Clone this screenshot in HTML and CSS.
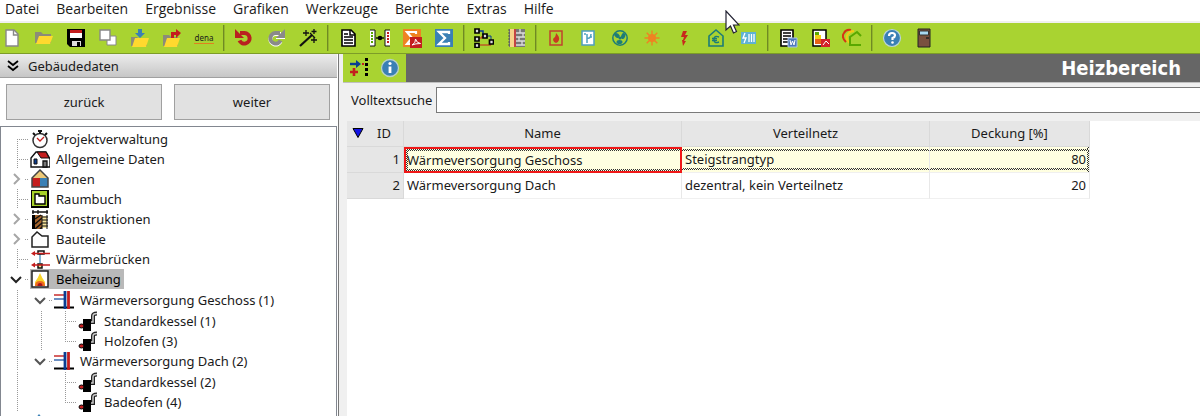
FILE: index.html
```html
<!DOCTYPE html>
<html lang="de">
<head>
  <meta charset="utf-8">
  <title>Heizbereich</title>
  <link rel="stylesheet" href="styles.css">
</head>
<body>
  <!-- icons used more than once -->
  <svg class="defs">
    <symbol id="pipes" viewBox="0 0 20 20">
      <path d="M0 5h11" stroke="#c41e1e" stroke-width="1.4"/>
      <path d="M0 9h11" stroke="#2c5fa8" stroke-width="1.4"/>
      <path d="M0 17.5h20" stroke="#000" stroke-width="2"/>
      <path d="M11 1v18" stroke="#0b3d91" stroke-width="2.8"/>
      <path d="M14.5 1v18" stroke="#c41e1e" stroke-width="2.8"/>
    </symbol>
    <symbol id="boiler" viewBox="0 0 20 20">
      <path d="M11 11h4V5q0-2.500 4-2.500" fill="none" stroke="#222" stroke-width="4"/>
      <path d="M11 11h4V5q0-2.500 4-2.500" fill="none" stroke="#ccc" stroke-width="1.500"/>
      <path d="M5 8h8v12H5z"/>
      <ellipse cx="3.500" cy="15" rx="2.500" ry="2" fill="#c41e1e" stroke="#000"/>
    </symbol>
    <symbol id="right" viewBox="0 0 12 12"><path d="M4 1l5 5-5 5" fill="none" stroke="#a6a6a6" stroke-width="2"/></symbol>
    <symbol id="down" viewBox="0 0 12 12"><path d="M1 4l5 5 5-5" fill="none" stroke="currentColor" stroke-width="2"/></symbol>
  </svg>

  <nav class="menu">
    <button>Datei</button>
    <button>Bearbeiten</button>
    <button>Ergebnisse</button>
    <button>Grafiken</button>
    <button>Werkzeuge</button>
    <button>Berichte</button>
    <button>Extras</button>
    <button>Hilfe</button>
  </nav>

  <div class="toolbar">
    <button aria-label="Neu"><svg viewBox="0 0 20 20"><path d="M4 2h8l4 4v12H4z" fill="#fff" stroke="#888" stroke-width="1.4"/><path d="M11.500 2v5H16" fill="none" stroke="#888" stroke-width="1.4"/></svg></button>
    <button aria-label="Öffnen"><svg viewBox="0 0 20 20"><path d="M1 4h6l2 2h8v9H1z" fill="#8c8c78"/><path d="M5 8h14l-3 8H2z" fill="#ffd92e"/></svg></button>
    <button aria-label="Speichern"><svg viewBox="0 0 20 20"><path d="M1 1h18v18H4l-3-3z"/><path d="M4 2h12v8H4z" fill="#fff"/><path d="M4 2h12v3H4z" fill="#c41e1e"/><path d="M6 13h9v5H6z" fill="#ddd"/><path d="M11 14h3v4h-3z"/></svg></button>
    <button aria-label="Kopieren"><svg viewBox="0 0 20 20"><path d="M9 8h9v9H9z" fill="#fff" stroke="#888"/><path d="M2 2h10v10H2z" fill="#fff" stroke="#888" stroke-width="1.400"/></svg></button>
    <button aria-label="Importieren"><svg viewBox="0 0 20 20"><path d="M1 9h6l2 2h8v7H1z" fill="#8c8c78"/><path d="M5 10h14l-3 9H2z" fill="#ffd92e"/><path d="M8 1h4v4h3l-5 5-5-5h3z" fill="#3a80b5"/></svg></button>
    <button aria-label="Exportieren"><svg viewBox="0 0 20 20"><path d="M1 7h6l2 2h7v9H1z" fill="#8c8c78"/><path d="M5 10h13l-3 9H2z" fill="#ffd92e"/><path d="M9 8V4h5V1l5 4-5 5V7h-2v3H9z" fill="#c41e1e"/></svg></button>
    <button class="dena">dena</button>
    <i></i>
    <button aria-label="Rückgängig"><svg viewBox="0 0 20 20"><path d="M6 5h4.500a5.300 5.300 0 1 1-5 7.500" fill="none" stroke="#b92020" stroke-width="4"/><path d="M1 1v9h9z" fill="#b92020"/></svg></button>
    <button aria-label="Wiederholen"><svg viewBox="0 0 20 20"><path d="M15 6H9.500a5.300 5.300 0 1 0 5 7.500" fill="none" stroke="#fff" stroke-width="4"/><path d="M14 5H9.500a5.300 5.300 0 1 0 5 7.500" fill="none" stroke="#8a8a8a" stroke-width="4"/><path d="M19 1v9h-9z" fill="#8a8a8a"/><path d="M10 10.500h9" stroke="#fff"/></svg></button>
    <button aria-label="Assistent"><svg viewBox="0 0 20 20"><path d="M2 18L14 7" stroke="#111" stroke-width="2.200"/><path d="M8 2v6M5 5h6M16 1v5M13.500 3.500h5M16 9v6M13 12h6M12 5l5 5" stroke="#111" stroke-width="1.300"/></svg></button>
    <i></i>
    <button aria-label="Bericht"><svg viewBox="0 0 20 20"><path d="M4 2h9l4 4v12H4z" fill="#fff" stroke="#000" stroke-width="1.600"/><path d="M12 2v5h5M6 6h4M6 9h9M6 12h9M6 15h9" fill="none" stroke="#000" stroke-width="1.500"/></svg></button>
    <button aria-label="Vergleich"><svg viewBox="0 0 20 20"><path d="M0 2h5v16H0zM15 2h5v16h-5z" fill="#fff"/><path d="M0 2h5v16H0M20 2h-5v16h5" fill="none" stroke="#111"/><path d="M2 4v12" stroke="#59a800" stroke-width="2" stroke-dasharray="2 1"/><path d="M18 4v12" stroke="#c41e1e" stroke-width="2" stroke-dasharray="2 1"/><path d="M6 10h8" stroke="#111" stroke-width="1.500"/><circle cx="10" cy="10" r="2.300"/></svg></button>
    <button aria-label="Summe als PDF"><svg viewBox="0 0 20 20"><path d="M1 1h18v18H1z" fill="#ee8322"/><path d="M14 6V4H5l5 6-5 6h7" fill="none" stroke="#fff" stroke-width="2.200"/><path d="M8 9h12v11H8z" fill="#c41e1e"/><path d="M10 17q4-2 3.500-6 1 4 5 4.500-5 0-8.500 1.500" fill="none" stroke="#fff"/></svg></button>
    <button aria-label="Summe"><svg viewBox="0 0 20 20"><path d="M1 1h18v18H1z" fill="#3a80b5"/><path d="M15 6V4H5l6 6-6 6h10v-2" fill="none" stroke="#fff" stroke-width="2.300"/></svg></button>
    <i></i>
    <button aria-label="Baumstruktur"><svg viewBox="0 0 20 20"><path d="M4 3h5v4" fill="none" stroke="#0b3d91" stroke-width="1.500"/><path d="M4 10h4V8M4 17h13v-3" fill="none" stroke="#c41e1e"/><path d="M11 8h6v4" fill="none" stroke="#0b3d91"/><g fill="#ddd" stroke="#000" stroke-width="1.700"><path d="M1 1h4v4H1zM1 9h4v4H1zM1 15.500h4v4H1zM9 6h4v4H9zM15.500 12h4v4h-4z"/></g></svg></button>
    <button aria-label="Wandaufbau"><svg viewBox="0 0 20 20"><path d="M3 1h16v18H3z" fill="#777"/><path d="M4 1h4v18H4z" fill="#f7d28b"/><path d="M3 1v18" stroke="#555" stroke-dasharray="2 1"/><path d="M9 1v18" stroke="#d33" stroke-width="1.500"/><path d="M10 5h9M10 9h9M10 13h9M10 17h9M14 1v4M17 5v4M13 9v4M16 13v4" stroke="#ddd" stroke-width="1.300"/></svg></button>
    <i></i>
    <button aria-label="Heizung"><svg viewBox="0 0 20 20"><path d="M4 3h12v14H4z" fill="none" stroke="#c0442c" stroke-width="1.500"/><path d="M10 5q4 4 3 7-1 3-3 3t-3-3q0-2 2-3 1-2 1-4" fill="#c83a20"/></svg></button>
    <button aria-label="Trinkwasser"><svg viewBox="0 0 20 20"><path d="M4 3h12v14H4z" fill="#fff" stroke="#4d9fc0" stroke-width="1.500"/><path d="M9 15V6M9 10q4 1 4-4M7 5v2M12 9h2" fill="none" stroke="#4d9fc0" stroke-width="1.500"/></svg></button>
    <button aria-label="Lüftung"><svg viewBox="0 0 20 20"><circle cx="10" cy="10" r="7.200" fill="none" stroke="#1c7c78" stroke-width="1.500"/><g fill="#1c7c78"><circle cx="10" cy="10" r="1.500"/><ellipse cx="7" cy="7.500" rx="3" ry="2" transform="rotate(35 7 7.500)"/><ellipse cx="13.200" cy="8" rx="2" ry="3" transform="rotate(20 13 8)"/><ellipse cx="9.500" cy="14" rx="3" ry="2"/></g></svg></button>
    <button aria-label="Solar"><svg viewBox="0 0 20 20"><circle cx="10" cy="10" r="4" fill="#ee8322"/><path d="M10 2.500v15M2.500 10h15M4.700 4.700l10.600 10.600M15.300 4.700L4.700 15.300" stroke="#ee8322" stroke-width="1.400"/></svg></button>
    <button aria-label="Strom"><svg viewBox="0 0 20 20"><path d="M9 3h4l-2 4h3l-4 6h2l-3 5-1-6h1l1-3H7z" fill="#c82a1c"/></svg></button>
    <button aria-label="Kosten"><svg viewBox="0 0 20 20"><path d="M3 18V8l7-6 7 6v10z" fill="none" stroke="#1c7c78" stroke-width="1.600"/><path d="M13 9q-5-2-5 2.500t5 2.500M6 10.500h5M6 12.500h5" fill="none" stroke="#1c7c78" stroke-width="1.400"/></svg></button>
    <button aria-label="Photovoltaik"><svg viewBox="0 0 20 20"><path d="M3 4h15v12H3z" fill="#5fb2d3"/><path d="M11 6v8M13.500 6v8M16 6v8M7 5l-2 5h3l-2 5" fill="none" stroke="#fff" stroke-width="1.300"/></svg></button>
    <i></i>
    <button aria-label="Word-Bericht"><svg viewBox="0 0 20 20"><path d="M3 2h12v16H3z" fill="#fff" stroke="#000" stroke-width="1.600"/><path d="M5 5h8M5 8h8M5 11h5M5 14h5" stroke="#000" stroke-width="1.600"/><path d="M10 10h9v9h-9z" fill="#4d78bc" stroke="#a9c3e8"/><path d="M12 12l1 5 1.500-4 1.500 4 1-5" fill="none" stroke="#fff"/></svg></button>
    <button aria-label="Energieausweis"><svg viewBox="0 0 20 20"><path d="M3 2h13v16H3z" fill="#fff" stroke="#000" stroke-width="1.500"/><path d="M5 4h4v3H5z" fill="#59a800"/><path d="M5 7h6v4H5z" fill="#f1cf16"/><path d="M5 11h7v5H5z" fill="#e66315"/><path d="M11 11h9v8h-9z" fill="#d3202a"/><path d="M13 17l3-4 3 3" fill="none" stroke="#fff"/></svg></button>
    <button aria-label="Sanierung"><svg viewBox="0 0 20 20"><path d="M4 14Q-1 9 2 5q2-4 7-3" fill="none" stroke="#d63315" stroke-width="2"/><path d="M7 15Q3 9 6 6q2-3 6-3" fill="none" stroke="#f1c816" stroke-width="2"/><path d="M19 8l-4-4-7 5v8h11" fill="none" stroke="#59a800" stroke-width="2"/></svg></button>
    <i></i>
    <button aria-label="Hilfe"><svg viewBox="0 0 20 20"><circle cx="10" cy="10" r="8.500" fill="#3a80b5" stroke="#bcd5d8" stroke-width="1.200"/><path d="M7 8q0-3 3-3t3 2.500Q13 9 10.500 10v2" fill="none" stroke="#fff" stroke-width="2.200"/><circle cx="10.500" cy="14.500" r="1.300" fill="#fff"/></svg></button>
    <button aria-label="Beenden"><svg viewBox="0 0 20 20"><path d="M4 1h12v18H4z" fill="#79503f" stroke="#222"/><path d="M5.500 3h9v4h-9z" fill="#a8d8f2" stroke="#333"/><path d="M12 10h3" stroke="#222" stroke-width="1.500"/></svg></button>
  </div>

  <div class="content">
    <aside>
      <h2><svg viewBox="0 0 12 12"><path d="M1 1l5 4 5-4M1 6l5 4 5-4" fill="none" stroke="#000" stroke-width="1.800"/></svg>Gebäudedaten</h2>
      <div class="steps">
        <button>zurück</button>
        <button>weiter</button>
      </div>
      <ul class="tree">
        <li><div class="row"><span class="first"></span><svg class="icon" viewBox="0 0 20 20"><circle cx="10" cy="11.500" r="7" fill="#fff" stroke="#333" stroke-width="1.500"/><path d="M8 2h4M10 2v3M3 4l2 2M17 4l-2 2" stroke="#111" stroke-width="2"/><path d="M7 9l3 3 4-4" fill="none" stroke="#c41e1e" stroke-width="1.300"/></svg>Projektverwaltung</div></li>
        <li><div class="row"><span class="tee"></span><svg class="icon" viewBox="0 0 20 20"><path d="M1 18V9l5-6h10l4 7v8z" fill="#fff" stroke="#111" stroke-width="1.400"/><path d="M7 3h9l3 6h-8z" fill="#c41e1e" stroke="#111"/><path d="M4 10h3v5H4z" fill="#0b3d91" stroke="#111"/><path d="M13 12h4v6h-4z" fill="#777" stroke="#111" stroke-width="1.300"/></svg>Allgemeine Daten</div></li>
        <li><div class="row"><button aria-label="Aufklappen"><svg><use href="#right"/></svg></button><svg class="icon" viewBox="0 0 20 20"><path d="M2 9h8v9H2z" fill="#c41e1e"/><path d="M10 9h8v9h-8z" fill="#3a80b5"/><path d="M2 9l8-8 8 8z" fill="#edc978"/><path d="M2 9l8-8 8 8v9H2z" fill="none" stroke="#444" stroke-width="1.500"/></svg>Zonen</div></li>
        <li><div class="row"><span class="tee"></span><svg class="icon" viewBox="0 0 20 20"><path d="M1 1h18v18H1z"/><path d="M2 2h15v15H2z" fill="#a7d129"/><path d="M5 5h4v2h6v8H5z" fill="#fff" stroke="#000" stroke-width="1.400"/></svg>Raumbuch</div></li>
        <li><div class="row"><button aria-label="Aufklappen"><svg><use href="#right"/></svg></button><svg class="icon" viewBox="0 0 20 20"><path d="M2 3h16M3 1v4M8 1v4M17 1v4" stroke="#111" stroke-width="1.300"/><path d="M2 6h3v14H2z"/><path d="M5 6h7v14H5z" fill="#a5632a"/><path d="M5 10l6-4M5 15l7-6M5 20l7-6M10 20l2-2" stroke="#111" stroke-width="1.500"/><path d="M12 7h5v12h-5z" fill="#f6e39c"/><path d="M12 8h6M12 11h6M12 14h6M12 17h6M12 6v14M17 6v14" stroke="#111"/></svg>Konstruktionen</div></li>
        <li><div class="row"><button aria-label="Aufklappen"><svg><use href="#right"/></svg></button><svg class="icon" viewBox="0 0 20 20"><path d="M2 18V8l5-5 5 4h6v11z" fill="#fff" stroke="#222" stroke-width="1.500"/></svg>Bauteile</div></li>
        <li><div class="row"><span class="tee"></span><svg class="icon" viewBox="0 0 20 20"><path d="M10 5v9" stroke="#5b9ac4" stroke-width="1.500"/><path d="M8 2h6v3H8z" fill="#fff" stroke="#111" stroke-width="1.500"/><path d="M8 15h4v4H8z" fill="#f5e28a" stroke="#111" stroke-width="1.500"/><path d="M3 4.500h17M3 16h17" stroke="#c41e1e" stroke-width="1.500"/><path d="M1 4.500L5 2v5zM1 16l4-2.500v5z" fill="#c41e1e"/></svg>Wärmebrücken</div></li>
        <li>
          <div class="row active"><button aria-label="Zuklappen"><svg><use href="#down"/></svg></button><svg class="icon" viewBox="0 0 20 20"><path d="M2 2h16v16H2z" fill="#fff" stroke="#222" stroke-width="1.500"/><path d="M10 4q2 5 5 9v4H5v-4q3-4 5-9" fill="#f8d42a"/><path d="M5 17q0-5 5-5t5 5z" fill="#ee6b1e"/><path d="M7.500 17q0-3 2.500-3t2.500 3z" fill="#a8161b"/></svg><b>Beheizung</b></div>
          <ul>
            <li>
              <div class="row"><span class="line"></span><button aria-label="Zuklappen"><svg><use href="#down"/></svg></button><svg class="icon"><use href="#pipes"/></svg>Wärmeversorgung Geschoss (1)</div>
              <ul>
                <li><div class="row"><span class="line"></span><span class="line"></span><span class="tee"></span><svg class="icon"><use href="#boiler"/></svg>Standardkessel (1)</div></li>
                <li><div class="row"><span class="line"></span><span class="line"></span><span class="last"></span><svg class="icon"><use href="#boiler"/></svg>Holzofen (3)</div></li>
              </ul>
            </li>
            <li>
              <div class="row"><span class="line"></span><button aria-label="Zuklappen"><svg><use href="#down"/></svg></button><svg class="icon"><use href="#pipes"/></svg>Wärmeversorgung Dach (2)</div>
              <ul>
                <li><div class="row"><span class="line"></span><span></span><span class="tee"></span><svg class="icon"><use href="#boiler"/></svg>Standardkessel (2)</div></li>
                <li><div class="row"><span class="line"></span><span></span><span class="last"></span><svg class="icon"><use href="#boiler"/></svg>Badeofen (4)</div></li>
              </ul>
            </li>
          </ul>
        </li>
        <li><div class="row"><button aria-label="Aufklappen"><svg><use href="#right"/></svg></button><svg class="icon" viewBox="0 0 20 20"><path d="M9 2q5 6 5 10t-5 4-5-4 5-10" fill="#3a80b5"/></svg></div></li>
      </ul>
    </aside>

    <main>
      <header>
        <div class="tools">
          <button aria-label="Hinzufügen"><svg viewBox="0 0 20 20"><path d="M1 6h7" stroke="#0b3d91" stroke-width="2.400"/><path d="M7 2l5 4-5 4z" fill="#0b3d91"/><path d="M5 10v8M1 14h8" stroke="#c41e1e" stroke-width="2.600"/><path d="M13 5h2v2h-2z" fill="#c41e1e"/><path d="M16 0h3v3h-3zM16 5h3v3h-3zM16 10h3v3h-3zM16 15h3v3h-3z"/></svg></button>
          <button aria-label="Info"><svg viewBox="0 0 20 20"><circle cx="10" cy="10" r="8.500" fill="#3a80b5" stroke="#b9d2c8" stroke-width="1.300"/><path d="M10 8.500V15" stroke="#fff" stroke-width="2.800"/><circle cx="10" cy="5.500" r="1.600" fill="#fff"/></svg></button>
        </div>
        <h1>Heizbereich</h1>
      </header>
      <div class="search">
        <label for="search">Volltextsuche</label>
        <input id="search" type="text">
      </div>
      <div class="grid">
        <table>
          <colgroup><col class="id"><col class="name"><col class="net"><col class="share"></colgroup>
          <thead>
            <tr>
              <th><div><svg viewBox="0 0 12 12"><path d="M1 1.500h10L6 10.500z" fill="#1414e6" stroke="#000" stroke-width="1"/></svg>ID</div></th>
              <th>Name</th>
              <th>Verteilnetz</th>
              <th>Deckung [%]</th>
            </tr>
          </thead>
          <tbody>
            <tr class="selected">
              <th>1</th>
              <td class="current">Wärmeversorgung Geschoss</td>
              <td>Steigstrangtyp</td>
              <td class="num">80</td>
            </tr>
            <tr>
              <th>2</th>
              <td>Wärmeversorgung Dach</td>
              <td>dezentral, kein Verteilnetz</td>
              <td class="num">20</td>
            </tr>
          </tbody>
        </table>
      </div>
    </main>
  </div>

  <svg class="cursor" viewBox="0 0 15 25"><path d="M1 1v19l4.500-4 3 7 3-1.500-3-6.500H14z" fill="#fff" stroke="#223" stroke-width="1.200"/></svg>
</body>
</html>
```

FILE: styles.css
```css
* {
  box-sizing: border-box;
}
body {
  margin: 0;
  height: 100vh;
  display: flex;
  flex-direction: column;
  overflow: hidden;
  font: 13px/20px "Noto Sans", sans-serif;
  color: #1a1a1a;
  background: #fff;
}
button {
  margin: 0;
  padding: 0;
  border: 0;
  background: none;
  font: inherit;
  color: inherit;
}
svg {
  display: block;
  flex: none;
}
.defs {
  display: none;
}

/* menu and toolbar */
.menu {
  display: flex;
  gap: 17px;
  height: 23px;
  padding: 0 5px 4px;
  border-bottom: 2px solid #f0f0f0;
  font: 14px/17px "Open Sans", sans-serif;
}
.toolbar {
  display: flex;
  align-items: center;
  gap: 12px;
  height: 31px;
  padding: 0 2px;
  background: #a9d331;
  border-bottom: 1px solid #7d9c28;
}
.toolbar button, .toolbar svg, .tools svg {
  width: 20px;
  height: 20px;
}
.toolbar i {
  width: 2px;
  height: 26px;
  margin: 0 -3px;
  background: #6f8a23;
  border-right: 1px solid #93b62d;
}
.toolbar .dena {
  height: 12px;
  font-size: 8px;
  line-height: 10px;
  border-bottom: 1px solid #e0801e;
}

.content {
  flex: 1;
  display: flex;
  min-height: 0;
}

/* left side */
aside {
  flex: 0 0 339px;
  display: flex;
  flex-direction: column;
  padding-right: 1px;
  border-right: 1px solid #777;
}
h2 {
  display: flex;
  align-items: center;
  gap: 9px;
  margin: 0;
  height: 24px;
  padding-left: 7px;
  font-size: 13px;
  font-weight: normal;
  background: linear-gradient(#ececec, #c6c6c6);
  border-bottom: 1px solid #a0a0a0;
}
h2 svg {
  width: 12px;
  height: 12px;
}
.steps {
  display: flex;
  gap: 12px;
  padding: 6px 7px 6px 6px;
}
.steps button {
  flex: 1;
  height: 36px;
  background: #e1e1e1;
  border: 1px solid #a0a0a0;
}
.tree {
  flex: 1;
  min-height: 0;
  overflow: hidden;
  padding: 2px 4px;
  border: 1px solid #828790;
  border-bottom: 0;
}
ul {
  margin: 0;
  padding: 0;
  list-style: none;
}
.tree ul {
  padding-top: 1px;
}
.row {
  display: flex;
  width: max-content;
  height: 20px;
}
.icon {
  width: 20px;
  height: 20px;
  margin: 0 6px 0 1px;
}
.active b {
  font-weight: normal;
  padding: 0 3px 0 6px;
  margin-left: -6px;
  background: #b9b9b9;
  color: #000;
}
.active .icon {
  background: #b9b9b9;
}

/* each level of the tree is one 24px cell */
.row span, .row button {
  width: 24px;
  height: 20px;
  --v: repeating-linear-gradient(#999 0 1px, transparent 1px 2px);
  --h: repeating-linear-gradient(90deg, #999 0 1px, transparent 1px 2px);
  background-repeat: no-repeat;
}
.row button {
  padding-left: 5px;
  color: #222;
  background-image: var(--h);
  background-size: 4px 1px;
  background-position: 20px 10px;
}
.tree ul button {
  color: #555;
}
.row button svg {
  width: 12px;
  height: 12px;
}
.line {
  background-image: var(--v);
  background-size: 1px 20px;
  background-position: 12px 0;
}
.tee {
  background-image: var(--v), var(--h);
  background-size: 1px 20px, 12px 1px;
  background-position: 12px 0, 12px 10px;
}
.first {
  background-image: var(--v), var(--h);
  background-size: 1px 10px, 12px 1px;
  background-position: 12px 10px, 12px 10px;
}
.last {
  background-image: var(--v), var(--h);
  background-size: 1px 10px, 12px 1px;
  background-position: 12px 0, 12px 10px;
}

/* right side */
main {
  flex: 1;
  min-width: 0;
  display: flex;
  flex-direction: column;
  padding-left: 4px;
  background: #f0f0f0;
}
header {
  display: flex;
  height: 29px;
  background: #666;
  border-bottom: 1px solid #c0c0c0;
}
.tools {
  display: flex;
  align-items: center;
  gap: 11px;
  padding: 0 6px;
  width: 63px;
  background: #a9d331;
}
h1 {
  margin: 0 19px 0 auto;
  font: bold 20px/28px "DejaVu Sans Condensed", sans-serif;
  color: #fff;
}
.search {
  display: flex;
  align-items: center;
  gap: 4px;
  height: 38px;
  padding: 0 0 4px 8px;
}
.search input {
  flex: 1;
  height: 26px;
  border: 1px solid #7a7a7a;
  border-right: 0;
  font: inherit;
}
.grid {
  flex: 1;
  margin-left: 4px;
  background: #fff;
}
table {
  border-spacing: 0;
  table-layout: fixed;
  width: 743px;
}
.id { width: 57px; }
.name { width: 278px; }
.net { width: 248px; }
.share { width: 160px; }
th, td {
  height: 26px;
  padding: 0 3px 2px 3px;
  line-height: 20px;
  font-weight: normal;
  text-align: left;
  border-right: 1px solid #e8e8e8;
  border-bottom: 1px solid #f0f0f0;
}
th {
  background: #e6e6e6;
  border-color: #d9d9d9;
}
thead th {
  text-align: center;
}
thead div {
  display: flex;
  align-items: center;
  gap: 13px;
  padding-left: 2px;
}
thead svg {
  width: 12px;
  height: 12px;
}
tbody th, .num {
  text-align: right;
}

/* focus frame round the selected row */
.selected td {
  --dots: repeating-conic-gradient(#333 0 25%, #ffffe1 0 50%);
  background: var(--dots) 0 2px / 2px 2px repeat-x, var(--dots) 0 21px / 2px 2px repeat-x, #ffffe1;
}
.selected td.current {
  padding-bottom: 1px;
  border: 0;
  box-shadow: inset 0 0 0 2px #f01818;
  background: var(--dots) 0 2px / 2px 2px repeat-x, var(--dots) 0 22px / 2px 2px repeat-x, var(--dots) 2px 0 / 2px 2px repeat-y, #ffffe1;
}
.selected td.num {
  background: var(--dots) 0 2px / 2px 2px repeat-x, var(--dots) 0 21px / 2px 2px repeat-x, var(--dots) 157px 0 / 2px 2px repeat-y, #ffffe1;
}

/* mouse pointer */
.cursor {
  position: absolute;
  left: 725px;
  top: 10px;
  width: 15px;
  height: 25px;
}
```
